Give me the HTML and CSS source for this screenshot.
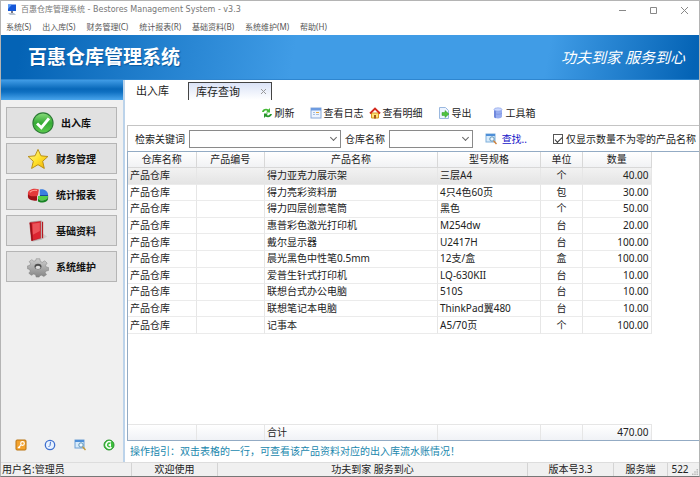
FILE: index.html
```html
<!DOCTYPE html>
<html lang="zh-CN">
<head>
	<meta charset="UTF-8">
	<title>百惠仓库管理系统</title>
	<link rel="stylesheet" href="styles.css">
</head>
<body>
	<div class="window">
		<div class="titlebar">
			<svg class="logo" viewBox="0 0 10 12"><rect x="1" y="0.5" width="8" height="6.5" fill="#1557d8"/><path d="M1 .5h4L1 5z" fill="#5d9bf5"/><path d="M4 7h2v2H4z" fill="#778"/><path d="M1 9h6l2 2H3z" fill="#b9c3d0"/></svg>
			<span class="name">百惠仓库管理系统 - Bestores Management System - v3.3</span>
			<button class="win" title="最小化"><svg viewBox="0 0 9 9"><path d="M1 4.5h7"/></svg></button>
			<button class="win" title="最大化"><svg viewBox="0 0 9 9"><path d="M1.5 1.5h6v6h-6z"/></svg></button>
			<button class="win" title="关闭"><svg viewBox="0 0 9 9"><path d="M1 1l7 7M8 1l-7 7"/></svg></button>
		</div>
		<div class="menu">
			<button>系统(S)</button>
			<button>出入库(S)</button>
			<button>财务管理(C)</button>
			<button>统计报表(R)</button>
			<button>基础资料(B)</button>
			<button>系统维护(M)</button>
			<button>帮助(H)</button>
		</div>
		<div class="banner">
			<h1>百惠仓库管理系统</h1>
			<p>功夫到家 服务到心</p>
		</div>

		<div class="main">
			<div class="side">
				<div class="side-top"></div>
				<div class="side-nav">
					<button>
						<svg viewBox="0 0 24 24"><defs><linearGradient id="green" x1="0" y1="0" x2="0" y2="1"><stop offset="0" stop-color="#8ade7d"/><stop offset=".5" stop-color="#35aa35"/><stop offset="1" stop-color="#5ccb4e"/></linearGradient></defs><circle cx="12" cy="12" r="11" fill="url(#green)" stroke="#2c7a35" stroke-width="1.2"/><path d="M5.5 12.5l4.7 4.6L18.5 7" fill="none" stroke="#fff" stroke-width="3.2"/></svg>
						出入库
					</button>
					<button>
						<svg viewBox="0 0 24 24"><defs><linearGradient id="gold" x1="0" y1="0" x2="1" y2="1"><stop offset="0" stop-color="#fff6a0"/><stop offset=".5" stop-color="#ffe32e"/><stop offset="1" stop-color="#eeaa05"/></linearGradient></defs><path d="M12 1.5l3.2 7 7.6.8-5.7 5.2 1.8 7.8L12 18.2l-7 4.1 1.9-7.8L1.2 9.3l7.6-.8z" fill="url(#gold)" stroke="#b48a12" stroke-width="1" stroke-linejoin="round"/></svg>
						财务管理
					</button>
					<button>
						<svg viewBox="0 0 24 24"><path d="M1 10v4c0 3 5 5 10 4v-6z" fill="#9d1015"/><path d="M1 10c0-4 7-6 12-4l-1 6-1 1C6 14 1 13 1 10z" fill="#e43a3a"/><path d="M14 6c5-1 9 2 9 6h-9z" fill="#3a7fe0"/><path d="M14 12h9v3h-9z" fill="#174a9c"/><path d="M12 13h11c0 3-3 5-8 5l-3-2z" fill="#55cf48"/><path d="M12 16l3 2c5 0 8-2 8-5v3c0 3-5 5-9 4l-2-1z" fill="#188424"/><path d="M3 9c2-2 5-2.500 8-2" fill="none" stroke="#ff9a90" stroke-width="1.2"/></svg>
						统计报表
					</button>
					<button>
						<svg viewBox="0 0 24 24"><path d="M16 14l6 4-5 3z" fill="#ccc"/><path d="M4 2l12-1v20L6 23z" fill="#eee" stroke="#999" stroke-width=".6"/><path d="M3 3l12-1.500V20L5 22.500z" fill="#dc2430" stroke="#a1111a" stroke-width=".6"/><path d="M3 3l2 .5 1.500 18.500-1.500.5z" fill="#981018"/><path d="M6 4l8-1v9l-7.500 4z" fill="#f2686b" opacity=".7"/><path d="M17 2v18" stroke="#b4161c" stroke-width="1.2"/></svg>
						基础资料
					</button>
					<button>
						<svg viewBox="0 0 24 24"><defs><linearGradient id="steel" x1="0" y1="0" x2="0" y2="1"><stop offset="0" stop-color="#cfcfcf"/><stop offset="1" stop-color="#858585"/></linearGradient></defs><g fill="url(#steel)" stroke="#777" stroke-width=".5"><path d="M10 3h4l.6 3 2.100.9 2.700-1.700 2.600 2.600-1.700 2.300.7 1.900 2.500.6v3.200l-2.700.6-1 1.800 1.500 2.100-2.900 2.100-2.500-1.500-2 .6L13.300 23H10l-.7-2.600-2-.7-2.500 1.400L2 18.800l1.600-2.300-.8-1.800L.6 14v-3.200l2.500-.6.8-1.800-1.500-2.300L5.200 4l2.300 1.700L9.500 5z"/></g><ellipse cx="12" cy="11.500" rx="3.800" ry="3" fill="#4e4e4e"/><ellipse cx="12" cy="12.500" rx="2.600" ry="1.800" fill="#ddd"/></svg>
						系统维护
					</button>
				</div>
				<div class="side-tools">
					<button title="密码"><svg viewBox="0 0 12 12"><rect x="1" y="1" width="10" height="10" rx="1" fill="#f3a32f" stroke="#b97413"/><circle cx="7.500" cy="4.500" r="1.800" fill="none" stroke="#fff" stroke-width="1.2"/><path d="M6.200 5.800L3 9M4 8l1 1" stroke="#fff" stroke-width="1.2"/></svg></button>
					<button title="时间"><svg viewBox="0 0 12 12"><circle cx="6" cy="6" r="4.700" fill="#e8f2ff" stroke="#3f70cf" stroke-width="1.300"/><path d="M6.500 2.800L6 6.500 4.500 8" fill="none" stroke="#3f70cf"/></svg></button>
					<button title="查找"><svg viewBox="0 0 12 12"><rect x="1" y="1" width="9" height="8" fill="#d8ebfb" stroke="#6fa0d4"/><path d="M1 1h9v2H1z" fill="#4e8fd8"/><circle cx="7" cy="6" r="2.200" fill="#eef8ff" stroke="#5d93b8"/><path d="M8.600 7.800l2.900 3.200" stroke="#c59a3a" stroke-width="1.500"/></svg></button>
					<button title="退出"><svg viewBox="0 0 12 12"><circle cx="6" cy="6" r="5" fill="#3dbf3d" stroke="#2b982d"/><path d="M8 3.200A3.200 3.200 0 1 0 8.500 8.200" fill="none" stroke="#fff" stroke-width="1.500"/><path d="M5 6l3-2v4z" fill="#fff"/></svg></button>
				</div>
			</div>

			<div class="content">
				<div class="tabs">
					<button class="tab">出入库</button>
					<button class="tab on">库存查询<svg viewBox="0 0 7 7"><path d="M1 1l5 5M6 1L1 6"/></svg></button>
				</div>
				<div class="toolbar">
					<button><svg viewBox="0 0 12 12"><path d="M1 5c.5-3 4-4 6.500-2.500L9 1v4.500H5L6.300 4C5 3.300 3.500 3.500 3 5z" fill="#45b936"/><path d="M11 7c-.5 3-4 4-6.500 2.500L3 11V6.500h4L5.700 8C7 8.700 8.500 8.500 9 7z" fill="#27962a"/></svg>刷新</button>
					<button><svg viewBox="0 0 12 12"><rect x="1" y="1" width="10" height="10" fill="#eef5ff" stroke="#8aa9d8"/><path d="M1 1h10v2.500H1z" fill="#6d9be0"/><path d="M3 5.500h2M3 7.500h2M6 7.500h3" stroke="#a5bde0"/><path d="M6 5.500h3" stroke="#e9ac42"/></svg>查看日志</button>
					<button><svg viewBox="0 0 12 12"><path d="M2.500 6h7v5h-7z" fill="#ffe47a" stroke="#d8951e"/><path d="M1 6.500L6 1.500l5 5" fill="none" stroke="#d42a1e" stroke-width="1.800"/><path d="M5 8h2v3.500H5z" fill="#a4561b"/></svg>查看明细</button>
					<button><svg viewBox="0 0 12 12"><path d="M1.500.5h6l3 3v8h-9z" fill="#edf4ff" stroke="#9ab8df"/><path d="M4 5.500h3V3.500l4 3.500-4 3.500v-2H4z" fill="#4fc23e" stroke="#2f9a2b" stroke-width=".5"/></svg>导出</button>
					<button><svg viewBox="0 0 12 12"><path d="M2 2.500v7c0 2.500 8 2.500 8 0v-7z" fill="#98adf0"/><path d="M2 2.500v7c0 1 1 1.500 2 1.700V3z" fill="#6f88dd"/><ellipse cx="6" cy="2.500" rx="4" ry="1.700" fill="#cbd8ff" stroke="#8298e0" stroke-width=".6"/><path d="M2 6c1 1.700 7 1.700 8 0" fill="none" stroke="#7189da" stroke-width=".6"/></svg>工具箱</button>
				</div>
				<div class="search">
					<label for="keyword">检索关键词</label>
					<span class="combo combo-key"><select id="keyword"><option></option></select></span>
					<label for="store">仓库名称</label>
					<span class="combo combo-store"><select id="store"><option></option></select></span>
					<button class="find"><svg viewBox="0 0 12 12"><rect x="1" y="1" width="9" height="8" fill="#d8ebfb" stroke="#7fb0dc"/><path d="M1 1h9v2H1z" fill="#4e8fd8"/><circle cx="7" cy="6" r="2.200" fill="#eef8ff" stroke="#5d93b8"/><path d="M8.600 7.800l2.900 3.200" stroke="#d0813a" stroke-width="1.500"/></svg>查找..</button>
					<label class="check"><input type="checkbox" checked>仅显示数量不为零的产品名称</label>
				</div>
				<div class="grid">
					<table class="list">
						<thead>
							<tr><th class="w-store">仓库名称</th><th class="w-code">产品编号</th><th class="w-name">产品名称</th><th class="w-spec">型号规格</th><th class="w-unit">单位</th><th class="w-num">数量</th><td class="rest"></td></tr>
						</thead>
						<tbody>
							<tr class="on"><td>产品仓库</td><td></td><td>得力亚克力展示架</td><td>三层A4</td><td class="unit">个</td><td class="num">40.00</td><td class="rest"></td></tr>
							<tr><td>产品仓库</td><td></td><td>得力亮彩资料册</td><td>4只4色60页</td><td class="unit">包</td><td class="num">30.00</td><td class="rest"></td></tr>
							<tr><td>产品仓库</td><td></td><td>得力四层创意笔筒</td><td>黑色</td><td class="unit">个</td><td class="num">50.00</td><td class="rest"></td></tr>
							<tr><td>产品仓库</td><td></td><td>惠普彩色激光打印机</td><td>M254dw</td><td class="unit">台</td><td class="num">20.00</td><td class="rest"></td></tr>
							<tr><td>产品仓库</td><td></td><td>戴尔显示器</td><td>U2417H</td><td class="unit">台</td><td class="num">100.00</td><td class="rest"></td></tr>
							<tr><td>产品仓库</td><td></td><td>晨光黑色中性笔0.5mm</td><td>12支/盒</td><td class="unit">盒</td><td class="num">100.00</td><td class="rest"></td></tr>
							<tr><td>产品仓库</td><td></td><td>爱普生针式打印机</td><td>LQ-630KII</td><td class="unit">台</td><td class="num">10.00</td><td class="rest"></td></tr>
							<tr><td>产品仓库</td><td></td><td>联想台式办公电脑</td><td>510S</td><td class="unit">台</td><td class="num">10.00</td><td class="rest"></td></tr>
							<tr><td>产品仓库</td><td></td><td>联想笔记本电脑</td><td>ThinkPad翼480</td><td class="unit">台</td><td class="num">10.00</td><td class="rest"></td></tr>
							<tr><td>产品仓库</td><td></td><td>记事本</td><td>A5/70页</td><td class="unit">个</td><td class="num">100.00</td><td class="rest"></td></tr>
						</tbody>
					</table>
					<table class="total">
						<tr><td class="w-store"></td><td class="w-code"></td><td class="w-name">合计</td><td class="w-spec"></td><td class="w-unit"></td><td class="w-num num">470.00</td><td class="rest"></td></tr>
					</table>
				</div>
				<p class="hint">操作指引：双击表格的一行，可查看该产品资料对应的出入库流水账情况！</p>
			</div>
		</div>

		<div class="status">
			<span class="s-user">用户名:管理员</span>
			<span class="s-hello">欢迎使用</span>
			<span class="s-slogan">功夫到家 服务到心</span>
			<span class="s-ver">版本号3.3</span>
			<span class="s-server">服务端</span>
			<span class="s-port">522</span>
			<svg class="grip" viewBox="0 0 8 8"><path d="M6 0h2v2H6zM3 3h2v2H3zM6 3h2v2H6zM0 6h2v2H0zM3 6h2v2H3zM6 6h2v2H6z" fill="#bbb"/></svg>
		</div>
	</div>
</body>
</html>
```
FILE: styles.css
```css
*{
	margin: 0;
	padding: 0;
	box-sizing: border-box;
}
body{
	font: 10px/16px "Noto Sans", "Noto Sans CJK SC", sans-serif;
	color: #222;
	background: #fff;
}
button, select, input{
	font: inherit;
	color: inherit;
	border: none;
	background: none;
}
button{
	white-space: nowrap;
	cursor: pointer;
}
.window{
	display: flex;
	flex-direction: column;
	min-height: 100vh;
	border: 1px solid #b4b4b4;
	border-bottom-color: #777;
}

/* 标题栏和菜单 */
.titlebar{
	display: flex;
	align-items: center;
	height: 18px;
	padding: 0 10px 0 6px;
	font-family: "DejaVu Sans", "Noto Sans CJK SC", sans-serif;
	font-size: 8px;
	color: #777;
}
.logo{
	width: 10px;
	height: 12px;
	margin-right: 4px;
}
.name{flex: 1;}
.win{
	display: flex;
	margin-left: 22px;
}
.win svg{
	width: 9px;
	height: 9px;
	fill: none;
	stroke: #888;
}
.menu{
	display: flex;
	gap: 11px;
	height: 16px;
	padding-left: 5px;
	font-size: 8px;
	color: #555;
}

.banner{
	display: flex;
	align-items: center;
	justify-content: space-between;
	height: 45px;
	padding: 0 14px 0 27px;
	color: #fff;
	background: linear-gradient(100deg, #0463b5 3%, #409ce6 42%, #409ce6 78%, #0463b5 99%);
	border-bottom: 1px solid #2e86d0;
}
.banner h1{
	font-size: 19px;
	line-height: 28px;
	text-shadow: 1px 1px 1px #0b5aa0;
}
.banner p{
	font-size: 15px;
	font-style: italic;
}

.main{
	flex: 1;
	display: flex;
}

/* 左侧导航 */
.side{
	display: flex;
	flex-direction: column;
	width: 124px;
	background: #f0f0f0;
	border-right: 2px solid #bcd3ea;
}
.side-top{
	height: 20px;
	background: linear-gradient(#409ce6, #0868b9 45%, #0f70c2 60%, #49a5ec);
}
.side-nav{
	flex: 1;
	display: flex;
	flex-direction: column;
	gap: 5px;
	padding: 7px 6px 0 5px;
}
.side-nav button{
	display: flex;
	align-items: center;
	justify-content: center;
	gap: 7px;
	height: 31px;
	font-weight: bold;
	color: #111;
	background: #e1e1e1;
	border: 1px solid #b5b5b5;
}
.side-nav svg{
	width: 22px;
	height: 22px;
}
.side-tools{
	display: flex;
	justify-content: space-between;
	padding: 0 8px 11px 14px;
}
.side-tools button{display: flex;}
.side-tools svg{
	width: 12px;
	height: 12px;
}

/* 右侧内容 */
.content{
	flex: 1;
	display: flex;
	flex-direction: column;
	min-width: 0;
	padding-left: 2px;
}
.tabs{
	display: flex;
	height: 20px;
	padding: 2px 0 0 2px;
	font-size: 11px;
}
.tab{
	padding: 0 7px;
	margin-right: 12px;
}
.tab.on{
	display: flex;
	align-items: center;
	justify-content: space-between;
	width: 84px;
	padding: 0 4px 0 7px;
	background: linear-gradient(#dbe3f7, #fff);
	border: 1px solid #444;
	border-bottom: none;
}
.tab svg{
	width: 7px;
	height: 7px;
	fill: none;
	stroke: #999;
}
.toolbar{
	display: flex;
	height: 25px;
	padding-left: 121px;
}
.toolbar button{
	display: flex;
	align-items: center;
	justify-content: center;
	gap: 2px;
	width: 59px;
}
.toolbar svg, .find svg{
	width: 12px;
	height: 12px;
}
.search{
	display: flex;
	align-items: center;
	gap: 4px;
	height: 26px;
	padding: 0 3px 0 7px;
	border: 1px solid #c4c4c4;
	border-right: none;
	border-bottom: none;
	white-space: nowrap;
}
.combo{
	position: relative;
	height: 18px;
}
.combo-key{flex: 151;}
.combo-store{flex: 83;}
.combo select{
	display: block;
	width: 100%;
	height: 18px;
	appearance: none;
	background: #fff;
	border: 1px solid #8a8a8a;
}
.combo::after{
	content: "";
	position: absolute;
	top: 5px;
	right: 5px;
	width: 4px;
	height: 4px;
	border: solid #666;
	border-width: 0 1px 1px 0;
	transform: rotate(45deg);
	pointer-events: none;
}
.find{
	display: flex;
	align-items: center;
	gap: 5px;
	margin: 0 22px 0 8px;
	color: #1414c8;
}
.check{
	display: flex;
	align-items: center;
	gap: 3px;
}
.check input{
	display: flex;
	align-items: center;
	justify-content: center;
	width: 10px;
	height: 10px;
	appearance: none;
	border: 1px solid #555;
}
.check input:checked::before{
	content: "";
	width: 6px;
	height: 3px;
	border: solid #333;
	border-width: 0 0 1px 1px;
	transform: rotate(-45deg);
}

/* 库存表格 */
.grid{
	flex: 1;
	display: flex;
	flex-direction: column;
	justify-content: space-between;
	border: 1px solid #93abc4;
	border-right: none;
}
table{
	width: 100%;
	table-layout: fixed;
	border-collapse: separate;
	border-spacing: 0;
}
.list{height: 182px;}
th, td{
	padding: 0 2px;
	line-height: 15px;
	white-space: nowrap;
	border-right: 1px solid #e6e6e6;
	border-bottom: 1px solid #ebebeb;
}
th{
	font-weight: normal;
	background: linear-gradient(#fff, #f1f2f4);
	border-color: #d8d8d8;
}
.on td{background: linear-gradient(#f2f2f2, #e4e4e4);}
.list .rest, .total .rest{
	background: none;
	border: none;
}
.w-store, .w-code, .w-num{width: 12%;}
.w-name{width: 30.3%;}
.w-spec{width: 18%;}
.w-unit{width: 7.4%;}
.unit{text-align: center;}
.num{text-align: right;}
.total td{
	height: 16px;
	background: linear-gradient(#fff, #f0f2f6);
	border-top: 1px solid #e6e6e6;
	border-bottom: none;
}
.hint{
	height: 21px;
	padding: 2px 0 0 3px;
	color: #2187ad;
}

/* 状态栏 */
.status{
	display: flex;
	height: 14px;
	line-height: 13px;
	background: #f0f0f0;
	border-top: 1px solid #ddd;
	text-align: center;
}
.status span{border-right: 1px solid #d4d4d4;}
.status .s-user{
	width: 131px;
	padding-left: 1px;
	text-align: left;
}
.s-hello, .s-ver{width: 86px;}
.s-slogan{flex: 1;}
.s-server{width: 54px;}
.status .s-port{
	width: 24px;
	border: none;
}
.grip{
	width: 6px;
	height: 6px;
	margin: 6px 1px 0 0;
}
```
